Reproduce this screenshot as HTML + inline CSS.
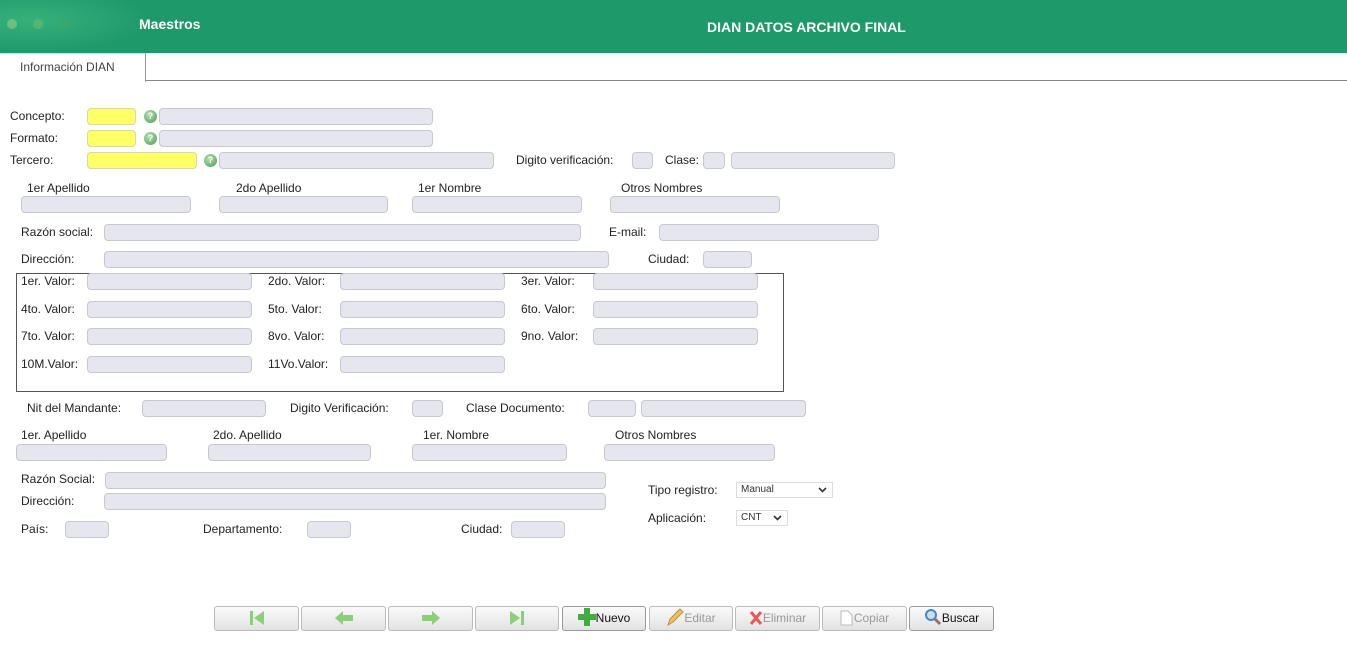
<!DOCTYPE html>
<html><head><meta charset="utf-8"><style>
*{box-sizing:border-box;margin:0;padding:0}
body{width:1347px;height:666px;position:relative;background:#fff;font-family:"Liberation Sans","DejaVu Sans",sans-serif;font-size:12px;color:#222;overflow:hidden}
.hd{position:absolute;left:0;top:0;width:1347px;height:53px;background:#1e996a}
.glow{position:absolute;left:0;top:0;width:150px;height:53px;background:radial-gradient(ellipse at 30px 20px,rgba(80,200,140,.5),rgba(30,153,106,0) 120px)}
.dot{position:absolute;top:19px;width:10px;height:10px;border-radius:50%}
.t{position:absolute;white-space:nowrap;line-height:16px}
.w{color:#fff;font-weight:bold;font-size:14px}
.i{position:absolute;height:17px;background:#e6e6ee;border:1px solid #c8c8d0;border-radius:4px}
.y{background:#ffff66;border-color:#d8d8a0}
.q{position:absolute;width:13px;height:13px;border-radius:50%;background:radial-gradient(circle at 40% 35%,#b8e0b8,#4a9a4a);color:#fff;font-size:9px;font-weight:bold;text-align:center;line-height:13px}
.sel{position:absolute;height:16px;border:1px solid #ddd;background:#fff;font-size:10px;padding-left:4px;line-height:14px;color:#333}
.sel svg{position:absolute;right:5px;top:4px}
.b{position:absolute;top:606px;height:25px;border:1px solid #bbb;border-radius:3px;background:linear-gradient(#fafafa,#e2e2e2);font-size:12px;line-height:23px;color:#999;text-align:center}
.b.on{color:#111;border-color:#999}
.b svg{vertical-align:-4px}
</style></head><body>
<div class="hd"><div class="glow"></div>
<div class="dot" style="left:7px;background:#7cc47a;opacity:.8"></div>
<div class="dot" style="left:33px;background:#5cb870;opacity:.8"></div>
<div class="dot" style="left:60px;background:#3aa86c;opacity:.8"></div>
<div class="t w" style="left:139px;top:16px">Maestros</div>
<div class="t w" style="left:707px;top:19px">DIAN DATOS ARCHIVO FINAL</div>
</div>
<div style="position:absolute;left:0;top:53px;width:146px;height:29px;border-right:1px solid #999;border-top:1px solid #ddd"></div>
<div style="position:absolute;left:146px;top:80px;width:1201px;height:1px;background:#888"></div>
<div class="t" style="left:20px;top:59px;color:#444">Información DIAN</div>

<div class="t" style="left:10px;top:108px">Concepto:</div>
<div class="i y" style="left:87px;top:108px;width:49px"></div><div class="q" style="left:144px;top:110px">?</div>
<div class="i" style="left:159px;top:108px;width:274px"></div>
<div class="t" style="left:10px;top:130px">Formato:</div>
<div class="i y" style="left:87px;top:130px;width:49px"></div><div class="q" style="left:144px;top:132px">?</div>
<div class="i" style="left:159px;top:130px;width:274px"></div>
<div class="t" style="left:10px;top:152px">Tercero:</div>
<div class="i y" style="left:87px;top:152px;width:110px"></div><div class="q" style="left:204px;top:154px">?</div>
<div class="i" style="left:219px;top:152px;width:275px"></div>
<div class="t" style="left:516px;top:152px">Digito verificación:</div>
<div class="i" style="left:632px;top:152px;width:21px"></div>
<div class="t" style="left:665px;top:152px">Clase:</div>
<div class="i" style="left:703px;top:152px;width:22px"></div>
<div class="i" style="left:731px;top:152px;width:164px"></div>

<div class="t" style="left:27px;top:180px">1er Apellido</div>
<div class="t" style="left:236px;top:180px">2do Apellido</div>
<div class="t" style="left:418px;top:180px">1er Nombre</div>
<div class="t" style="left:621px;top:180px">Otros Nombres</div>
<div class="i" style="left:21px;top:196px;width:170px"></div>
<div class="i" style="left:219px;top:196px;width:169px"></div>
<div class="i" style="left:412px;top:196px;width:170px"></div>
<div class="i" style="left:610px;top:196px;width:170px"></div>

<div class="t" style="left:21px;top:224px">Razón social:</div>
<div class="i" style="left:104px;top:224px;width:477px"></div>
<div class="t" style="left:609px;top:224px">E-mail:</div>
<div class="i" style="left:659px;top:224px;width:220px"></div>
<div class="t" style="left:21px;top:251px">Dirección:</div>
<div class="i" style="left:104px;top:251px;width:505px"></div>
<div class="t" style="left:648px;top:251px">Ciudad:</div>
<div class="i" style="left:703px;top:251px;width:49px"></div>

<div style="position:absolute;left:16px;top:273px;width:768px;height:119px;border:1px solid #555"></div>
<div class="t" style="left:21px;top:273px">1er. Valor:</div><div class="i" style="left:87px;top:273px;width:165px"></div>
<div class="t" style="left:268px;top:273px">2do. Valor:</div><div class="i" style="left:340px;top:273px;width:165px"></div>
<div class="t" style="left:521px;top:273px">3er. Valor:</div><div class="i" style="left:593px;top:273px;width:165px"></div>
<div class="t" style="left:21px;top:301px">4to. Valor:</div><div class="i" style="left:87px;top:301px;width:165px"></div>
<div class="t" style="left:268px;top:301px">5to. Valor:</div><div class="i" style="left:340px;top:301px;width:165px"></div>
<div class="t" style="left:521px;top:301px">6to. Valor:</div><div class="i" style="left:593px;top:301px;width:165px"></div>
<div class="t" style="left:21px;top:328px">7to. Valor:</div><div class="i" style="left:87px;top:328px;width:165px"></div>
<div class="t" style="left:268px;top:328px">8vo. Valor:</div><div class="i" style="left:340px;top:328px;width:165px"></div>
<div class="t" style="left:521px;top:328px">9no. Valor:</div><div class="i" style="left:593px;top:328px;width:165px"></div>
<div class="t" style="left:21px;top:356px">10M.Valor:</div><div class="i" style="left:87px;top:356px;width:165px"></div>
<div class="t" style="left:268px;top:356px">11Vo.Valor:</div><div class="i" style="left:340px;top:356px;width:165px"></div>

<div class="t" style="left:27px;top:400px">Nit del Mandante:</div><div class="i" style="left:142px;top:400px;width:124px"></div>
<div class="t" style="left:290px;top:400px">Digito Verificación:</div><div class="i" style="left:412px;top:400px;width:31px"></div>
<div class="t" style="left:466px;top:400px">Clase Documento:</div><div class="i" style="left:588px;top:400px;width:48px"></div>
<div class="i" style="left:641px;top:400px;width:165px"></div>

<div class="t" style="left:21px;top:427px">1er. Apellido</div>
<div class="t" style="left:213px;top:427px">2do. Apellido</div>
<div class="t" style="left:423px;top:427px">1er. Nombre</div>
<div class="t" style="left:615px;top:427px">Otros Nombres</div>
<div class="i" style="left:16px;top:444px;width:151px"></div>
<div class="i" style="left:208px;top:444px;width:163px"></div>
<div class="i" style="left:412px;top:444px;width:155px"></div>
<div class="i" style="left:604px;top:444px;width:171px"></div>

<div class="t" style="left:21px;top:471px">Razón Social:</div><div class="i" style="left:105px;top:472px;width:501px"></div>
<div class="t" style="left:21px;top:493px">Dirección:</div><div class="i" style="left:104px;top:493px;width:502px"></div>
<div class="t" style="left:21px;top:521px">País:</div><div class="i" style="left:65px;top:521px;width:44px"></div>
<div class="t" style="left:203px;top:521px">Departamento:</div><div class="i" style="left:307px;top:521px;width:44px"></div>
<div class="t" style="left:461px;top:521px">Ciudad:</div><div class="i" style="left:511px;top:521px;width:54px"></div>

<div class="t" style="left:648px;top:482px">Tipo registro:</div>
<div class="sel" style="left:736px;top:482px;width:97px">Manual<svg width="9" height="6"><path d="M1 1L4.5 4.5L8 1" stroke="#333" stroke-width="1.6" fill="none"/></svg></div>
<div class="t" style="left:648px;top:510px">Aplicación:</div>
<div class="sel" style="left:736px;top:510px;width:52px">CNT<svg width="9" height="6"><path d="M1 1L4.5 4.5L8 1" stroke="#333" stroke-width="1.6" fill="none"/></svg></div>

<div class="b" style="left:214px;width:85px"><svg width="18" height="16"><rect x="2" y="1" width="3" height="14" fill="#8ccf7a"/><path d="M16 1L6 8L16 15Z" fill="#8ccf7a"/></svg></div>
<div class="b" style="left:301px;width:85px"><svg width="20" height="16"><path d="M1 8L9 1V5H19V11H9V15Z" fill="#8ccf7a"/></svg></div>
<div class="b" style="left:388px;width:85px"><svg width="20" height="16"><path d="M19 8L11 1V5H1V11H11V15Z" fill="#8ccf7a"/></svg></div>
<div class="b" style="left:475px;width:84px"><svg width="18" height="16"><path d="M2 1L12 8L2 15Z" fill="#8ccf7a"/><rect x="13" y="1" width="3" height="14" fill="#8ccf7a"/></svg></div>
<div class="b on" style="left:562px;width:84px"><svg width="18" height="18"><path d="M6 0H12V6H18V12H12V18H6V12H0V6H6Z" fill="#3fae3f"/></svg>Nuevo</div>
<div class="b" style="left:649px;width:84px"><svg width="18" height="18"><path d="M2 17L4 11L14 1L17 4L7 14Z" fill="#f0c060" stroke="#c09040"/></svg>Editar</div>
<div class="b" style="left:735px;width:85px"><svg width="14" height="16"><path d="M2 2L12 14M12 2L2 14" stroke="#e55" stroke-width="3"/></svg>Eliminar</div>
<div class="b" style="left:822px;width:85px"><svg width="14" height="18"><path d="M1 3H8L12 7V17H1Z" fill="#fff" stroke="#bbb"/></svg>Copiar</div>
<div class="b on" style="left:909px;width:85px"><svg width="18" height="18"><circle cx="7" cy="7" r="5" fill="#cde" stroke="#48c" stroke-width="2"/><path d="M11 11L16 16" stroke="#a66" stroke-width="3"/></svg>Buscar</div>
</body></html>
